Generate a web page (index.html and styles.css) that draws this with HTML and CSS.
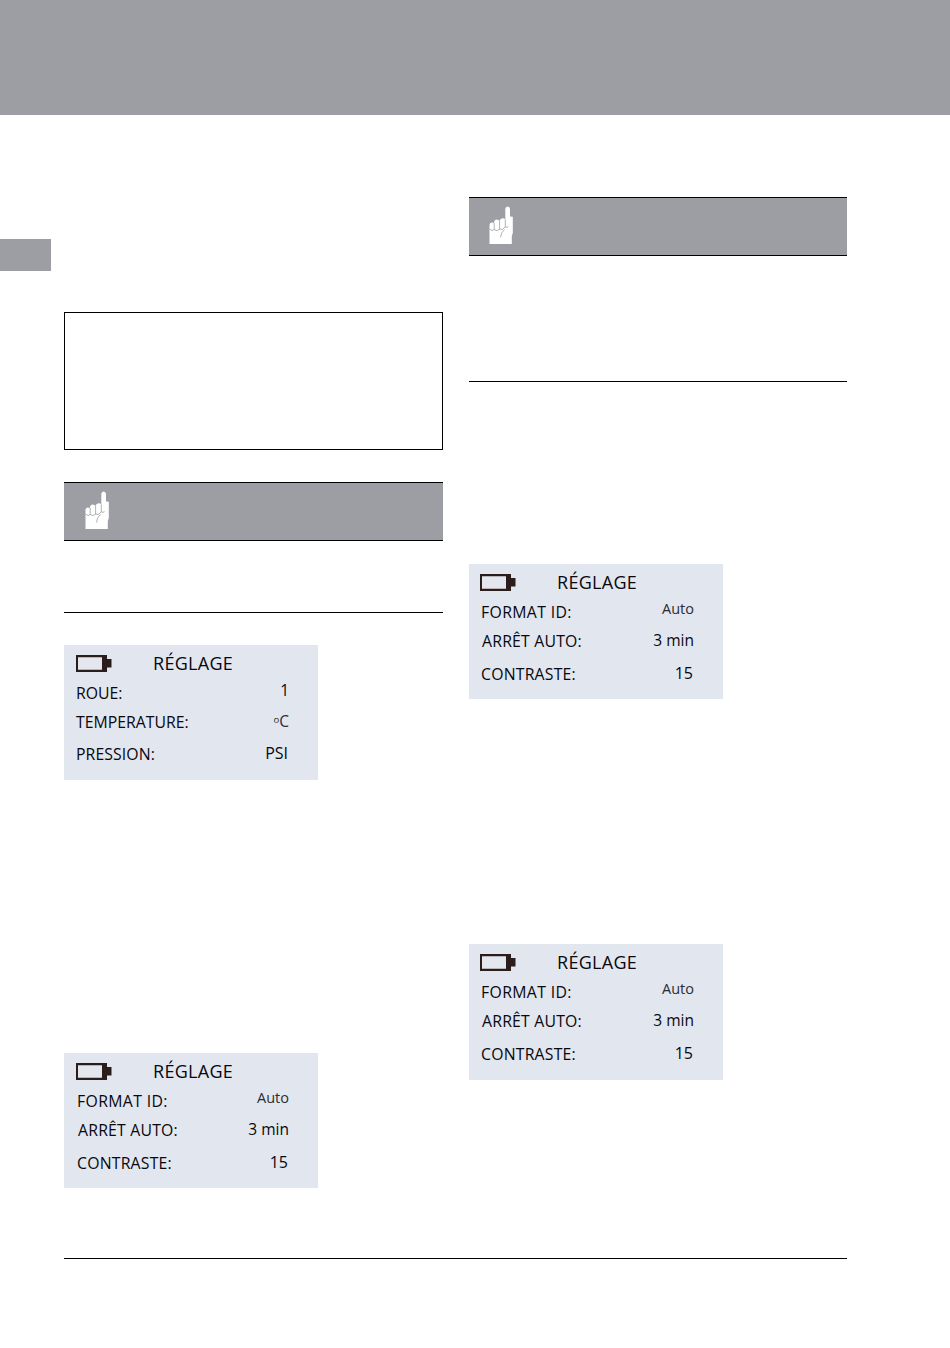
FILE: index.html
```
<!DOCTYPE html>
<html lang="fr">
<head>
<meta charset="utf-8">
<title>Réglage</title>
<link rel="stylesheet" href="styles.css">
</head>
<body>
<svg class="defs" width="0" height="0" aria-hidden="true">
  <symbol id="battery" viewBox="0 0 36 17">
    <path fill="#2b1d1c" fill-rule="evenodd" d="M0 0H31V4H35.500V12.500H31V17H0ZM2 2.500V14.500H26V2.500Z"/>
    <path fill="#e4e7ee" d="M2 2.500H26V14.500H2Z"/>
  </symbol>
  <symbol id="hand" viewBox="0 0 25 39">
    <path fill="#fff" d="M.5 38V19Q.5 16.500 2.700 16.500Q4 16.500 4.800 17.300Q5 13.500 7.800 13.500Q9.800 13.500 10.500 15Q11.200 12.300 13.600 12.300Q15.500 12.300 16.300 13.500V3Q16.500.5 18.600.5Q20.800.5 21 3V10.500L23.800 10.800V27L22.800 30V38Z"/>
    <path fill="none" stroke="#9d9ea3" stroke-width=".8" d="M5.200 17V23.500M10.600 15V23.500M16.300 13.500V21M.8 23Q3 26 5.200 23.500Q8 26 10.600 23Q13 25 16.300 21Q18 22 19.500 20.500M15.500 23.500Q11.800 26.500 11.500 31.500"/>
  </symbol>
</svg>
<header class="banner"></header>
<main class="page">
  <aside class="margin"><div class="tab"></div></aside>
  <div class="content">
    <div class="columns">
      <section class="column column-left">
        <div class="frame"></div>
        <div class="note">
          <div class="note-head"><svg class="hand"><use href="#hand"/></svg></div>
        </div>
        <div class="screen">
          <div class="screen-head"><svg class="battery"><use href="#battery"/></svg><span class="title">RÉGLAGE</span></div>
          <div class="row wheel"><span class="label">ROUE:</span><span class="value">1</span></div>
          <div class="row temperature"><span class="label">TEMPERATURE:</span><span class="value"><span class="degree">o</span>C</span></div>
          <div class="row pressure"><span class="label">PRESSION:</span><span class="value">PSI</span></div>
        </div>
        <div class="screen screen-last">
          <div class="screen-head"><svg class="battery"><use href="#battery"/></svg><span class="title">RÉGLAGE</span></div>
          <div class="row format"><span class="label">FORMAT ID:</span><span class="value">Auto</span></div>
          <div class="row shutoff"><span class="label">ARRÊT AUTO:</span><span class="value">3 min</span></div>
          <div class="row contrast"><span class="label">CONTRASTE:</span><span class="value">15</span></div>
        </div>
      </section>
      <section class="column column-right">
        <div class="note note-tall">
          <div class="note-head"><svg class="hand"><use href="#hand"/></svg></div>
        </div>
        <div class="screen">
          <div class="screen-head"><svg class="battery"><use href="#battery"/></svg><span class="title">RÉGLAGE</span></div>
          <div class="row format"><span class="label">FORMAT ID:</span><span class="value">Auto</span></div>
          <div class="row shutoff"><span class="label">ARRÊT AUTO:</span><span class="value">3 min</span></div>
          <div class="row contrast"><span class="label">CONTRASTE:</span><span class="value">15</span></div>
        </div>
        <div class="screen screen-last">
          <div class="screen-head"><svg class="battery"><use href="#battery"/></svg><span class="title">RÉGLAGE</span></div>
          <div class="row format"><span class="label">FORMAT ID:</span><span class="value">Auto</span></div>
          <div class="row shutoff"><span class="label">ARRÊT AUTO:</span><span class="value">3 min</span></div>
          <div class="row contrast"><span class="label">CONTRASTE:</span><span class="value">15</span></div>
        </div>
      </section>
    </div>
    <footer class="rule"></footer>
  </div>
</main>
</body>
</html>
```

FILE: styles.css
```
* { box-sizing: border-box; }
body {
  margin: 0;
  height: 1348px;
  background: #fff;
  font-family: "Open Sans", "Noto Sans", sans-serif;
  color: #08080e;
}
.defs { display: block; height: 0; }
.banner { height: 115px; background: #9d9ea3; }
.page { display: flex; }
.margin { width: 64px; padding-top: 124px; }
.tab { width: 51px; height: 32px; background: #9d9ea3; }
.content { width: 783px; }
.columns { display: flex; justify-content: space-between; height: 1143px; }
.column { display: flex; flex-direction: column; width: 379px; }
.column-left { padding-top: 197px; }
.column-right { width: 378px; padding-top: 82px; }
.frame { height: 138px; border: 1px solid #000; margin-bottom: 32px; }
.note { height: 131px; border-bottom: 1px solid #000; margin-bottom: 32px; }
.note-tall { height: 185px; margin-bottom: 182px; }
.note-head {
  height: 59px;
  padding: 8px 0 0 21px;
  border-top: 1px solid #000;
  border-bottom: 1px solid #000;
  background: #9d9ea3;
}
.column-right .note-head { padding-left: 20px; }
.hand { display: block; width: 25px; height: 39px; }
.screen {
  width: 254px;
  height: 135px;
  padding: 6px 29px 0 12px;
  background: #e2e6ef;
}
.column-right .screen { padding: 6px 29px 0 11px; }
.screen-last { margin-top: 273px; }
.column-right .screen-last { margin-top: 245px; height: 136px; }
.screen-head { display: flex; align-items: center; height: 25px; }
.battery { width: 36px; height: 17px; }
.title { margin-left: 41px; font-size: 18px; letter-spacing: .3px; line-height: 25px; }
.row { display: flex; justify-content: space-between; height: 24px; line-height: 24px; }
.label { font-size: 15.8px; }
.value { font-size: 15.5px; }
.wheel { margin-top: 5px; }
.wheel .value { margin-top: -3px; }
.temperature { margin-top: 5px; }
.temperature .value { margin-top: -1px; color: #2c2c34; }
.degree { font-size: 9.5px; vertical-align: 4px; line-height: 1; }
.pressure { margin-top: 8px; padding-right: 1px; }
.pressure .label { letter-spacing: .1px; }
.pressure .value { margin-top: -1px; font-size: 16px; }
.format { margin-top: 5px; }
.format .label { margin-left: 1px; letter-spacing: .35px; }
.format .value { margin-top: -3px; font-size: 14.5px; color: #2c2c34; }
.shutoff { margin-top: 5px; }
.shutoff .label { margin-left: 2px; letter-spacing: .2px; }
.shutoff .value { margin-top: -1px; }
.contrast { margin-top: 9px; padding-right: 1px; }
.contrast .label { margin-left: 1px; letter-spacing: .2px; }
.contrast .value { margin-top: -1px; font-size: 16px; }
.rule { border-top: 1px solid #000; }
```
